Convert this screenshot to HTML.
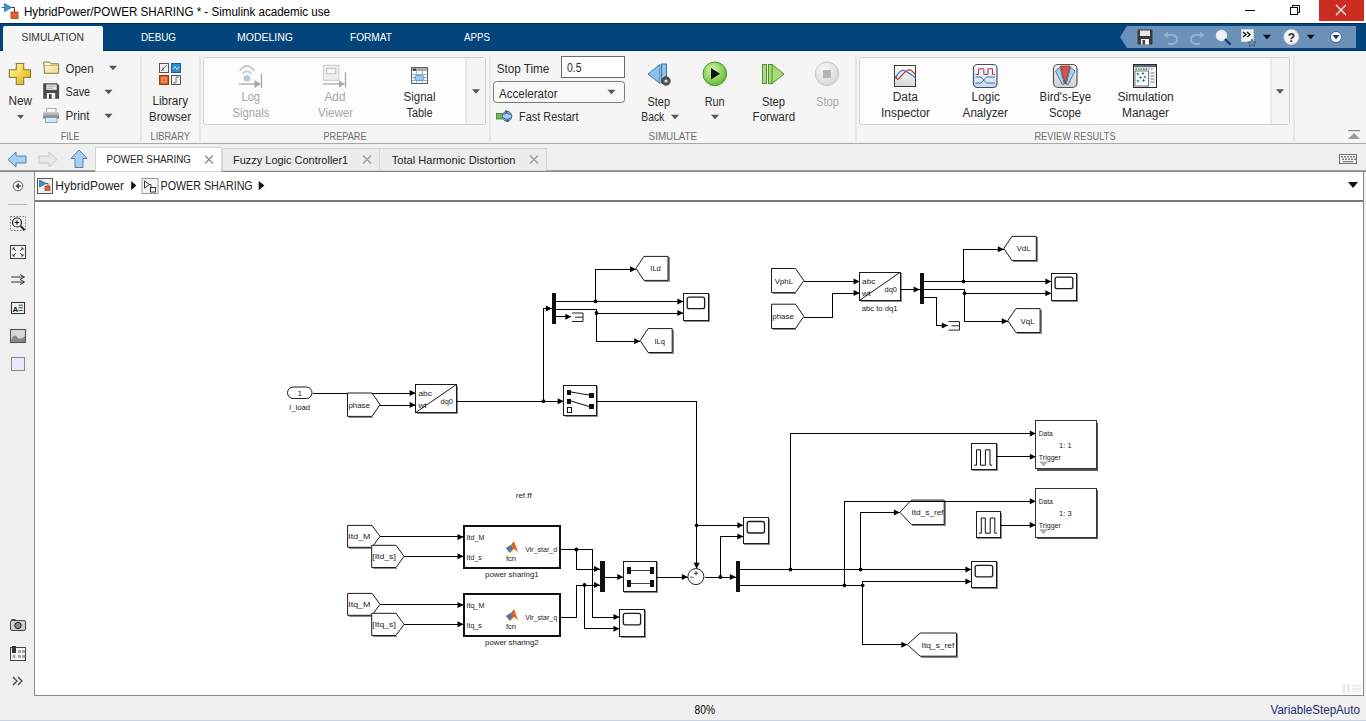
<!DOCTYPE html>
<html><head><meta charset="utf-8"><style>
html,body{margin:0;padding:0;width:1366px;height:721px;overflow:hidden;background:#fff}
svg{display:block;font-family:"Liberation Sans", sans-serif}
</style></head><body>
<svg width="1366" height="721" viewBox="0 0 1366 721" shape-rendering="auto">
<rect x="0" y="0" width="1366" height="23" fill="#ffffff" stroke="none" stroke-width="1" rx="0" />
<path d="M4.5,3.5 L4.5,11.5 L11.5,7.5 Z" fill="#3d9ad6" stroke="#1f6fa8" stroke-width="0.8" />
<polyline points="1.5,7.5 4.5,7.5" fill="none" stroke="#1f6fa8" stroke-width="1" />
<polyline points="11.5,7.5 14.5,7.5 14.5,12" fill="none" stroke="#333" stroke-width="1" />
<rect x="11" y="12" width="7" height="6.5" fill="#e8632c" stroke="#a04015" stroke-width="0.8" rx="0" />
<text x="24" y="16" font-size="12.5" fill="#000" text-anchor="start" font-weight="normal" textLength="306" lengthAdjust="spacingAndGlyphs" >HybridPower/POWER SHARING * - Simulink academic use</text>
<polyline points="1245,10.5 1255,10.5" fill="none" stroke="#000" stroke-width="1" />
<rect x="1290.5" y="7.5" width="7" height="7" fill="none" stroke="#000" stroke-width="1" rx="0" />
<path d="M1292.5,7.5 L1292.5,5.5 L1299.5,5.5 L1299.5,12.5 L1297.5,12.5" fill="none" stroke="#000" stroke-width="1" />
<rect x="1319" y="0" width="45" height="21" fill="#cb2d22" stroke="none" stroke-width="1" rx="0" />
<polyline points="1336,5 1346,15" fill="none" stroke="#fff" stroke-width="1.1" />
<polyline points="1346,5 1336,15" fill="none" stroke="#fff" stroke-width="1.1" />
<rect x="0" y="23" width="1366" height="28" fill="#03447b" stroke="none" stroke-width="1" rx="0" />
<rect x="0" y="23" width="1366" height="1" fill="#032f57" stroke="none" stroke-width="1" rx="0" />
<rect x="0" y="50" width="1366" height="1" fill="#032f57" stroke="none" stroke-width="1" rx="0" />
<path d="M3,51 L3,28 Q3,26 5,26 L101,26 Q103,26 103,28 L103,51 Z" fill="#f5f5f5" stroke="none" stroke-width="1" />
<text x="21.5" y="41" font-size="10.5" fill="#333" text-anchor="start" font-weight="normal" textLength="62.5" lengthAdjust="spacingAndGlyphs" >SIMULATION</text>
<text x="141" y="41" font-size="10.5" fill="#fff" text-anchor="start" font-weight="normal" textLength="35" lengthAdjust="spacingAndGlyphs" >DEBUG</text>
<text x="237" y="41" font-size="10.5" fill="#fff" text-anchor="start" font-weight="normal" textLength="56" lengthAdjust="spacingAndGlyphs" >MODELING</text>
<text x="350" y="41" font-size="10.5" fill="#fff" text-anchor="start" font-weight="normal" textLength="42" lengthAdjust="spacingAndGlyphs" >FORMAT</text>
<text x="464" y="41" font-size="10.5" fill="#fff" text-anchor="start" font-weight="normal" textLength="26" lengthAdjust="spacingAndGlyphs" >APPS</text>
<path d="M1120,37 L1127,26 L1356,26 L1356,48 L1127,48 Z" fill="#6b91b9" stroke="none" stroke-width="1" />
<rect x="0" y="51" width="1366" height="92" fill="#f5f5f5" stroke="none" stroke-width="1" rx="0" />
<rect x="0" y="143" width="1366" height="1" fill="#a8a8a8" stroke="none" stroke-width="1" rx="0" />
<rect x="0" y="144" width="1366" height="27" fill="#efefef" stroke="none" stroke-width="1" rx="0" />
<rect x="0" y="171" width="1366" height="550" fill="#f0f0f0" stroke="none" stroke-width="1" rx="0" />
<rect x="35" y="172" width="1328" height="28" fill="#ffffff" stroke="none" stroke-width="1" rx="0" />
<rect x="34" y="171" width="1" height="525" fill="#8a8a8a" stroke="none" stroke-width="1" rx="0" />
<rect x="0" y="170" width="1366" height="1" fill="#a0a0a0" stroke="none" stroke-width="1" rx="0" />
<rect x="0" y="171" width="1366" height="1" fill="#868686" stroke="none" stroke-width="1" rx="0" />
<rect x="35" y="200" width="1329" height="2" fill="#7a7a7a" stroke="none" stroke-width="1" rx="0" />
<rect x="35" y="202" width="1328" height="493" fill="#ffffff" stroke="none" stroke-width="1" rx="0" />
<rect x="34" y="695" width="1330" height="1" fill="#8a8a8a" stroke="none" stroke-width="1" rx="0" />
<rect x="1363" y="171" width="1" height="525" fill="#8a8a8a" stroke="none" stroke-width="1" rx="0" />
<rect x="0" y="696" width="1366" height="24" fill="#f0f0f0" stroke="none" stroke-width="1" rx="0" />
<rect x="0" y="720" width="1366" height="1" fill="#c5d3e0" stroke="none" stroke-width="1" rx="0" />
<text x="694.5" y="714" font-size="12" fill="#000" text-anchor="start" font-weight="normal" textLength="20.5" lengthAdjust="spacingAndGlyphs" >80%</text>
<text x="1270.5" y="714" font-size="12.5" fill="#1c2a6e" text-anchor="start" font-weight="normal" textLength="89.5" lengthAdjust="spacingAndGlyphs" >VariableStepAuto</text>
<rect x="140.5" y="56" width="1" height="86" fill="#dadada" stroke="none" stroke-width="1" rx="0" />
<rect x="199.5" y="56" width="1" height="86" fill="#dadada" stroke="none" stroke-width="1" rx="0" />
<rect x="489.5" y="56" width="1" height="86" fill="#dadada" stroke="none" stroke-width="1" rx="0" />
<rect x="855.5" y="56" width="1" height="86" fill="#dadada" stroke="none" stroke-width="1" rx="0" />
<rect x="1293.5" y="56" width="1" height="86" fill="#dadada" stroke="none" stroke-width="1" rx="0" />
<defs><linearGradient id="plusg" x1="0" y1="0" x2="1" y2="1"><stop offset="0" stop-color="#fff6c0"/><stop offset="0.5" stop-color="#f3d650"/><stop offset="1" stop-color="#d9a81c"/></linearGradient><linearGradient id="foldg" x1="0" y1="0" x2="1" y2="1"><stop offset="0" stop-color="#fffbe0"/><stop offset="1" stop-color="#ecd78a"/></linearGradient><linearGradient id="prng" x1="0" y1="0" x2="0" y2="1"><stop offset="0" stop-color="#d8d8d8"/><stop offset="1" stop-color="#707070"/></linearGradient></defs>
<path d="M16.3,63.5 L23.7,63.5 L23.7,69.8 L30.5,69.8 L30.5,77.5 L23.7,77.5 L23.7,84.5 L16.3,84.5 L16.3,77.5 L9.3,77.5 L9.3,69.8 L16.3,69.8 Z" fill="url(#plusg)" stroke="#8f7a2a" stroke-width="1.1" />
<text x="8.5" y="105" font-size="12" fill="#2b2b2b" text-anchor="start" font-weight="normal" textLength="23.5" lengthAdjust="spacingAndGlyphs" >New</text>
<path d="M17.0,115.0 L24.0,115.0 L20.5,119.0 Z" fill="#555" stroke="none" stroke-width="1" />
<path d="M43.7,62 L49.5,62 L51,63.8 L58.6,63.8 L58.6,73.3 L44.5,73.3 Z" fill="url(#foldg)" stroke="#8a7a40" stroke-width="1" />
<path d="M44,65.5 L58.3,65.5" fill="none" stroke="#b8a860" stroke-width="0.8" />
<text x="65.5" y="72.5" font-size="12" fill="#2b2b2b" text-anchor="start" font-weight="normal" textLength="28" lengthAdjust="spacingAndGlyphs" >Open</text>
<path d="M109.0,65.75 L117.0,65.75 L113,70.25 Z" fill="#555" stroke="none" stroke-width="1" />
<path d="M43.2,83.2 L57,83.2 L59.1,85.3 L59.1,98.7 L43.2,98.7 Z" fill="#4a4a4a" stroke="none" stroke-width="1" />
<rect x="46.3" y="84.5" width="10.4" height="5.4" fill="#e6e6e6" stroke="none" stroke-width="1" rx="0" />
<path d="M47.5,86.3 L55.5,86.3 M47.5,88.3 L53,88.3" fill="none" stroke="#999" stroke-width="0.7" />
<rect x="46.8" y="93" width="8.4" height="5.7" fill="#f4f4f4" stroke="none" stroke-width="1" rx="0" />
<rect x="49" y="94.2" width="2.6" height="4.5" fill="#3a3a3a" stroke="none" stroke-width="1" rx="0" />
<text x="65.5" y="96" font-size="12" fill="#2b2b2b" text-anchor="start" font-weight="normal" textLength="24.5" lengthAdjust="spacingAndGlyphs" >Save</text>
<path d="M104.5,89.75 L112.5,89.75 L108.5,94.25 Z" fill="#555" stroke="none" stroke-width="1" />
<rect x="46.5" y="108.5" width="9.5" height="4.5" fill="#fafafa" stroke="#999" stroke-width="0.8" rx="0" />
<rect x="43.2" y="111.7" width="15.9" height="7" fill="url(#prng)" stroke="none" stroke-width="1" rx="1.5" />
<rect x="45.5" y="117.5" width="11.5" height="5" fill="#d6e8f2" stroke="#7a98aa" stroke-width="0.8" rx="0" />
<text x="65.5" y="120" font-size="12" fill="#2b2b2b" text-anchor="start" font-weight="normal" textLength="24" lengthAdjust="spacingAndGlyphs" >Print</text>
<path d="M104.5,113.75 L112.5,113.75 L108.5,118.25 Z" fill="#555" stroke="none" stroke-width="1" />
<text x="60.8" y="139.5" font-size="10.5" fill="#6e6e6e" text-anchor="start" font-weight="normal" textLength="18.7" lengthAdjust="spacingAndGlyphs" >FILE</text>
<rect x="159.5" y="63.5" width="9" height="9" fill="#f2f2f2" stroke="#555" stroke-width="1" rx="0" />
<path d="M161,71 L167,65 M163,71 L163,67" fill="none" stroke="#555" stroke-width="0.8" />
<rect x="171.5" y="63.5" width="9" height="9" fill="#2f8fcf" stroke="#1d5f8f" stroke-width="1" rx="0" />
<path d="M173,69 Q175,65 176,68 T179,67" fill="none" stroke="#fff" stroke-width="0.8" />
<rect x="159.5" y="75.5" width="9" height="9" fill="#e05a1f" stroke="#9a3a10" stroke-width="1" rx="0" />
<rect x="162" y="78" width="4" height="4" fill="none" stroke="#ffd0b0" stroke-width="0.8" rx="0" />
<rect x="171.5" y="75.5" width="9" height="9" fill="#f2f2f2" stroke="#555" stroke-width="1" rx="0" />
<path d="M173,83 L176,83 L176,77 L179,77" fill="none" stroke="#555" stroke-width="0.8" />
<text x="152.5" y="105" font-size="12" fill="#2b2b2b" text-anchor="start" font-weight="normal" textLength="35.5" lengthAdjust="spacingAndGlyphs" >Library</text>
<text x="149" y="121" font-size="12" fill="#2b2b2b" text-anchor="start" font-weight="normal" textLength="42" lengthAdjust="spacingAndGlyphs" >Browser</text>
<text x="150.5" y="139.5" font-size="10.5" fill="#6e6e6e" text-anchor="start" font-weight="normal" textLength="39.5" lengthAdjust="spacingAndGlyphs" >LIBRARY</text>
<rect x="203.5" y="57.5" width="282" height="67" fill="#fdfdfd" stroke="#d0d0d0" stroke-width="1" rx="2" />
<rect x="466" y="58" width="19" height="66" fill="#f4f4f4" stroke="none" stroke-width="1" rx="0" />
<rect x="465.5" y="58" width="1" height="66" fill="#dcdcdc" stroke="none" stroke-width="1" rx="0" />
<path d="M472.0,89.25 L480.0,89.25 L476,93.75 Z" fill="#555" stroke="none" stroke-width="1" />
<path d="M239.5,71 Q247,61 254.5,71" fill="none" stroke="#c6ccd2" stroke-width="1.8" />
<path d="M242.5,74 Q247,68.5 251.5,74" fill="none" stroke="#c6ccd2" stroke-width="1.8" />
<circle cx="247" cy="78.2" r="3.3" fill="#b8c8d6"/>
<polyline points="239,84 255,84" fill="none" stroke="#b4b4b4" stroke-width="1.5" />
<path d="M254.5,80 L261,84 L254.5,88 Z" fill="#a8a8a8" stroke="none" stroke-width="1" />
<polyline points="261.5,73.5 261.5,88" fill="none" stroke="#a8a8a8" stroke-width="1.3" />
<text x="241.5" y="101" font-size="12" fill="#a6a6a6" text-anchor="start" font-weight="normal" textLength="18.5" lengthAdjust="spacingAndGlyphs" >Log</text>
<text x="232.5" y="117" font-size="12" fill="#a6a6a6" text-anchor="start" font-weight="normal" textLength="37" lengthAdjust="spacingAndGlyphs" >Signals</text>
<rect x="323.3" y="65.3" width="15.5" height="15" fill="#eceef0" stroke="#c8ccd0" stroke-width="1" rx="0" />
<rect x="326.5" y="68.3" width="9.3" height="5.5" fill="#f2f4f6" stroke="#b8bec4" stroke-width="0.9" rx="0" />
<polyline points="323,84 340,84" fill="none" stroke="#b4b4b4" stroke-width="1.5" />
<path d="M339,80.4 L345.2,84 L339,87.5 Z" fill="#a8a8a8" stroke="none" stroke-width="1" />
<polyline points="345.5,72.3 345.5,87.5" fill="none" stroke="#a8a8a8" stroke-width="1.3" />
<text x="324.5" y="101" font-size="12" fill="#a6a6a6" text-anchor="start" font-weight="normal" textLength="21" lengthAdjust="spacingAndGlyphs" >Add</text>
<text x="318" y="117" font-size="12" fill="#a6a6a6" text-anchor="start" font-weight="normal" textLength="35" lengthAdjust="spacingAndGlyphs" >Viewer</text>
<rect x="411.5" y="67.5" width="16" height="16" fill="#f4f8fb" stroke="#5a6470" stroke-width="1" rx="0" />
<rect x="412" y="68" width="15" height="3" fill="#b0aaa4" stroke="none" stroke-width="1" rx="0" />
<rect x="413" y="68.8" width="3" height="1.8" fill="#1f2f5a" stroke="none" stroke-width="1" rx="0" />
<polyline points="412,74.5 427,74.5" fill="none" stroke="#8aa0b4" stroke-width="0.8" />
<polyline points="412,77.5 427,77.5" fill="none" stroke="#8aa0b4" stroke-width="0.8" />
<polyline points="412,80.5 427,80.5" fill="none" stroke="#8aa0b4" stroke-width="0.8" />
<polyline points="416.6,71 416.6,83" fill="none" stroke="#8aa0b4" stroke-width="0.8" />
<polyline points="422.3,71 422.3,83" fill="none" stroke="#8aa0b4" stroke-width="0.8" />
<rect x="415.1" y="75.5" width="8.6" height="5" fill="#9cc8f0" stroke="#5a90c8" stroke-width="0.8" rx="1.2" />
<text x="403.5" y="101" font-size="12" fill="#2b2b2b" text-anchor="start" font-weight="normal" textLength="32" lengthAdjust="spacingAndGlyphs" >Signal</text>
<text x="406.5" y="117" font-size="12" fill="#2b2b2b" text-anchor="start" font-weight="normal" textLength="26" lengthAdjust="spacingAndGlyphs" >Table</text>
<text x="323.5" y="139.5" font-size="10.5" fill="#6e6e6e" text-anchor="start" font-weight="normal" textLength="43" lengthAdjust="spacingAndGlyphs" >PREPARE</text>
<text x="496.7" y="72.5" font-size="12" fill="#2b2b2b" text-anchor="start" font-weight="normal" textLength="52.5" lengthAdjust="spacingAndGlyphs" >Stop Time</text>
<rect x="561.5" y="56.5" width="63" height="21" fill="#fff" stroke="#6a6a6a" stroke-width="1" rx="0" />
<text x="567" y="72" font-size="12" fill="#2b2b2b" text-anchor="start" font-weight="normal" textLength="14.5" lengthAdjust="spacingAndGlyphs" >0.5</text>
<rect x="493.5" y="81.5" width="131" height="21" fill="#f8f8f8" stroke="#7a7a7a" stroke-width="1" rx="3" />
<text x="499" y="97.5" font-size="12" fill="#2b2b2b" text-anchor="start" font-weight="normal" textLength="58.5" lengthAdjust="spacingAndGlyphs" >Accelerator</text>
<path d="M607.5,89.75 L615.5,89.75 L611.5,94.25 Z" fill="#555" stroke="none" stroke-width="1" />
<rect x="496.5" y="113.5" width="6" height="5.5" fill="#7ab85a" stroke="#3f7a2f" stroke-width="0.8" rx="0" />
<circle cx="507" cy="116.2" r="4.8" fill="#a8cdea" stroke="#2f5f8f" stroke-width="1"/>
<path d="M503.5,114.5 Q507,111.5 510.5,114.5 M503.5,118 Q507,121 510.5,118" fill="none" stroke="#1f4f80" stroke-width="0.9" />
<path d="M505.5,109.8 L509,111.5 L505.5,113.2 Z M508.5,119.2 L505,121 L508.5,122.6 Z" fill="#2f5f8f" stroke="none" stroke-width="1" />
<text x="519" y="121" font-size="12" fill="#2b2b2b" text-anchor="start" font-weight="normal" textLength="59.5" lengthAdjust="spacingAndGlyphs" >Fast Restart</text>
<path d="M648,74 L660,64.5 L660,83.5 Z" fill="#8fc0e8" stroke="#3b78aa" stroke-width="1" />
<rect x="661.5" y="64" width="5" height="19" fill="#8fc0e8" stroke="#3b78aa" stroke-width="1" rx="0" />
<circle cx="666" cy="81" r="4.2" fill="#555" stroke="#333" stroke-width="0.8"/>
<circle cx="666" cy="81" r="1.6" fill="#ddd"/>
<text x="647.5" y="105.5" font-size="12" fill="#2b2b2b" text-anchor="start" font-weight="normal" textLength="22.5" lengthAdjust="spacingAndGlyphs" >Step</text>
<text x="641.3" y="121" font-size="12" fill="#2b2b2b" text-anchor="start" font-weight="normal" textLength="23" lengthAdjust="spacingAndGlyphs" >Back</text>
<path d="M671.0,114.75 L679.0,114.75 L675,119.25 Z" fill="#555" stroke="none" stroke-width="1" />
<defs><radialGradient id="rg" cx="0.4" cy="0.35" r="0.7"><stop offset="0" stop-color="#d6f5a8"/><stop offset="1" stop-color="#5fb82e"/></radialGradient><radialGradient id="sg" cx="0.4" cy="0.35" r="0.7"><stop offset="0" stop-color="#fafafa"/><stop offset="1" stop-color="#d4d4d4"/></radialGradient></defs>
<circle cx="714.8" cy="73.8" r="11.8" fill="url(#rg)" stroke="#4a8f2a" stroke-width="1"/>
<path d="M711,68 L720,73.8 L711,79.6 Z" fill="#111" stroke="none" stroke-width="1" />
<text x="704.7" y="105.5" font-size="12" fill="#2b2b2b" text-anchor="start" font-weight="normal" textLength="20" lengthAdjust="spacingAndGlyphs" >Run</text>
<path d="M711.0,114.75 L719.0,114.75 L715,119.25 Z" fill="#555" stroke="none" stroke-width="1" />
<rect x="762.5" y="64.5" width="4" height="19" fill="#a6da7a" stroke="#4f8f2f" stroke-width="1" rx="0" />
<rect x="768.5" y="64.5" width="4" height="19" fill="#a6da7a" stroke="#4f8f2f" stroke-width="1" rx="0" />
<path d="M772,64.5 L784,74 L772,83.5 Z" fill="#a6da7a" stroke="#4f8f2f" stroke-width="1" />
<text x="762" y="105.5" font-size="12" fill="#2b2b2b" text-anchor="start" font-weight="normal" textLength="23" lengthAdjust="spacingAndGlyphs" >Step</text>
<text x="752.6" y="121" font-size="12" fill="#2b2b2b" text-anchor="start" font-weight="normal" textLength="42.5" lengthAdjust="spacingAndGlyphs" >Forward</text>
<circle cx="827" cy="73.8" r="11.8" fill="url(#sg)" stroke="#c8c8c8" stroke-width="1"/>
<rect x="823" y="70" width="8" height="8" fill="#b5b5b5" stroke="none" stroke-width="1" rx="0" />
<text x="816" y="105.5" font-size="12" fill="#a6a6a6" text-anchor="start" font-weight="normal" textLength="23" lengthAdjust="spacingAndGlyphs" >Stop</text>
<text x="648.6" y="139.5" font-size="10.5" fill="#6e6e6e" text-anchor="start" font-weight="normal" textLength="48.5" lengthAdjust="spacingAndGlyphs" >SIMULATE</text>
<rect x="859.5" y="57.5" width="430" height="67" fill="#fdfdfd" stroke="#d0d0d0" stroke-width="1" rx="2" />
<rect x="1271" y="58" width="18" height="66" fill="#f4f4f4" stroke="none" stroke-width="1" rx="0" />
<rect x="1270.5" y="58" width="1" height="66" fill="#dcdcdc" stroke="none" stroke-width="1" rx="0" />
<path d="M1276.0,89.25 L1284.0,89.25 L1280,93.75 Z" fill="#555" stroke="none" stroke-width="1" />
<defs><linearGradient id="dig" x1="0" y1="0" x2="0" y2="1"><stop offset="0" stop-color="#ffffff"/><stop offset="1" stop-color="#d8d8d8"/></linearGradient><linearGradient id="lag" x1="0" y1="0" x2="0" y2="1"><stop offset="0" stop-color="#ffffff"/><stop offset="1" stop-color="#c8dcee"/></linearGradient></defs>
<rect x="894.5" y="65.5" width="21" height="21" fill="url(#dig)" stroke="#3a3a3a" stroke-width="1" rx="0" />
<path d="M895,78.5 C898,73 900.5,70.3 902.8,70.3 C906,70.3 910,74 915.2,77.5" fill="none" stroke="#3a78c0" stroke-width="1.2" />
<path d="M895,76.4 L897.7,79.5 C901,77 905,69.8 909,69.8 C911.5,69.8 913.5,72 915.2,74.4" fill="none" stroke="#c0392b" stroke-width="1.2" />
<text x="892.7" y="101" font-size="12" fill="#2b2b2b" text-anchor="start" font-weight="normal" textLength="25.3" lengthAdjust="spacingAndGlyphs" >Data</text>
<text x="881" y="117" font-size="12" fill="#2b2b2b" text-anchor="start" font-weight="normal" textLength="49" lengthAdjust="spacingAndGlyphs" >Inspector</text>
<rect x="973.5" y="64.5" width="23.5" height="23" fill="url(#lag)" stroke="#3f4f6a" stroke-width="1.2" rx="4" />
<path d="M975.5,74.4 L978.6,74.4 L978.6,68.8 L983.8,68.8 L983.8,74.4 L987.9,74.4 L987.9,68.8 L992.5,68.8 L992.5,74.4 L995,74.4" fill="none" stroke="#b03040" stroke-width="1" />
<path d="M975.5,77 L980,77 C983,77 984,83.1 988,83.1 L995,83.1 M975.5,83.1 L980,83.1 C983,83.1 984,77 988,77 L995,77" fill="none" stroke="#3a6fa8" stroke-width="1" />
<text x="971.6" y="101" font-size="12" fill="#2b2b2b" text-anchor="start" font-weight="normal" textLength="28.4" lengthAdjust="spacingAndGlyphs" >Logic</text>
<text x="962.6" y="117" font-size="12" fill="#2b2b2b" text-anchor="start" font-weight="normal" textLength="45.4" lengthAdjust="spacingAndGlyphs" >Analyzer</text>
<defs><linearGradient id="beg" x1="0" y1="0" x2="0" y2="1"><stop offset="0" stop-color="#f8f8f8"/><stop offset="1" stop-color="#d0d0d0"/></linearGradient></defs>
<rect x="1053.5" y="64.5" width="23.5" height="23" fill="url(#beg)" stroke="#555" stroke-width="1.2" rx="4.5" />
<path d="M1055.5,71 L1059.8,67 L1064.3,84 L1062.3,84.5 Z" fill="#a8d4f0" stroke="#2f5f8f" stroke-width="0.8" />
<path d="M1075,71 L1070.7,67 L1066.2,84 L1068.2,84.5 Z" fill="#a8d4f0" stroke="#2f5f8f" stroke-width="0.8" />
<path d="M1060.5,66 L1070,66 L1065.3,84 Z" fill="#d9534a" stroke="#8a2a2a" stroke-width="0.8" />
<text x="1039.6" y="101" font-size="12" fill="#2b2b2b" text-anchor="start" font-weight="normal" textLength="51.4" lengthAdjust="spacingAndGlyphs" >Bird's-Eye</text>
<text x="1049" y="117" font-size="12" fill="#2b2b2b" text-anchor="start" font-weight="normal" textLength="32" lengthAdjust="spacingAndGlyphs" >Scope</text>
<rect x="1133.5" y="64.5" width="23" height="23" fill="#f2f4f6" stroke="#2a2a2a" stroke-width="1" rx="0" />
<rect x="1134" y="65" width="22" height="2.2" fill="#5a6a80" stroke="none" stroke-width="1" rx="0" />
<rect x="1135.3" y="68.3" width="1.6" height="1.6" fill="#30a040" stroke="none" stroke-width="1" rx="0" />
<rect x="1137.8999999999999" y="68.3" width="1.6" height="1.6" fill="#30a040" stroke="none" stroke-width="1" rx="0" />
<rect x="1140.5" y="68.3" width="1.6" height="1.6" fill="#30a040" stroke="none" stroke-width="1" rx="0" />
<rect x="1143.1" y="68.3" width="1.6" height="1.6" fill="#d03030" stroke="none" stroke-width="1" rx="0" />
<rect x="1145.7" y="68.3" width="1.6" height="1.6" fill="#30a040" stroke="none" stroke-width="1" rx="0" />
<rect x="1148.3" y="68.3" width="1.6" height="1.6" fill="#b0b0b0" stroke="none" stroke-width="1" rx="0" />
<rect x="1150.8999999999999" y="68.3" width="1.6" height="1.6" fill="#b0b0b0" stroke="none" stroke-width="1" rx="0" />
<rect x="1135" y="71" width="13.5" height="15" fill="#fff" stroke="#555" stroke-width="0.8" rx="0" />
<path d="M1136.7,74 L1139.3,74 M1138,72.7 L1138,75.3" fill="none" stroke="#1f6f8f" stroke-width="0.9" />
<path d="M1141.7,73.5 L1144.3,73.5 M1143,72.2 L1143,74.8" fill="none" stroke="#1f6f8f" stroke-width="0.9" />
<path d="M1139.2,77.5 L1141.8,77.5 M1140.5,76.2 L1140.5,78.8" fill="none" stroke="#1f6f8f" stroke-width="0.9" />
<path d="M1136.7,81 L1139.3,81 M1138,79.7 L1138,82.3" fill="none" stroke="#1f6f8f" stroke-width="0.9" />
<path d="M1142.2,80.5 L1144.8,80.5 M1143.5,79.2 L1143.5,81.8" fill="none" stroke="#1f6f8f" stroke-width="0.9" />
<path d="M1143.7,77 L1146.3,77 M1145,75.7 L1145,78.3" fill="none" stroke="#1f6f8f" stroke-width="0.9" />
<polyline points="1150.5,73 1154.5,73" fill="none" stroke="#777" stroke-width="0.9" />
<polyline points="1150.5,76 1154.5,76" fill="none" stroke="#777" stroke-width="0.9" />
<polyline points="1150.5,79 1154.5,79" fill="none" stroke="#777" stroke-width="0.9" />
<polyline points="1150.5,82 1154.5,82" fill="none" stroke="#777" stroke-width="0.9" />
<text x="1117.5" y="101" font-size="12" fill="#2b2b2b" text-anchor="start" font-weight="normal" textLength="56.3" lengthAdjust="spacingAndGlyphs" >Simulation</text>
<text x="1122" y="117" font-size="12" fill="#2b2b2b" text-anchor="start" font-weight="normal" textLength="47" lengthAdjust="spacingAndGlyphs" >Manager</text>
<text x="1034.4" y="139.5" font-size="10.5" fill="#6e6e6e" text-anchor="start" font-weight="normal" textLength="81.2" lengthAdjust="spacingAndGlyphs" >REVIEW RESULTS</text>
<rect x="1348" y="130" width="12" height="1.2" fill="#888" stroke="none" stroke-width="1" rx="0" />
<path d="M1348,139 L1354,133 L1360,139 Z" fill="#9a9a9a" stroke="none" stroke-width="1" />
<rect x="1137.5" y="29.5" width="15" height="15" fill="#3b3b3b" stroke="none" stroke-width="1" rx="1" />
<rect x="1140" y="30.5" width="10" height="5.5" fill="#e8e8e8" stroke="none" stroke-width="1" rx="0" />
<rect x="1141" y="39" width="8" height="5.5" fill="#fafafa" stroke="none" stroke-width="1" rx="0" />
<rect x="1142.5" y="40" width="2.5" height="4.5" fill="#3b3b3b" stroke="none" stroke-width="1" rx="0" />
<path d="M1166,35 L1172,35 Q1177,35 1177,39.5 Q1177,44 1172,44 L1168,44" fill="none" stroke="#8fb1d3" stroke-width="1.8" />
<path d="M1163.5,35 L1168,31.5 L1168,38.5 Z" fill="#8fb1d3" stroke="none" stroke-width="1" />
<path d="M1202,35 L1196,35 Q1191,35 1191,39.5 Q1191,44 1196,44 L1200,44" fill="none" stroke="#8fb1d3" stroke-width="1.8" />
<path d="M1204.5,35 L1200,31.5 L1200,38.5 Z" fill="#8fb1d3" stroke="none" stroke-width="1" />
<circle cx="1221.5" cy="35.5" r="5" fill="#f2f2f2" stroke="#e8e8e8" stroke-width="1.5"/>
<polyline points="1225,39 1230.5,44.5" fill="none" stroke="#173a66" stroke-width="2.2" />
<rect x="1241.5" y="29.5" width="12" height="12" fill="#f4f4f4" stroke="#cfd8e0" stroke-width="0.8" rx="0" />
<path d="M1243,32 L1246,34.5 L1243,37 M1247,32 L1250,34.5 L1247,37" fill="none" stroke="#111" stroke-width="1.3" />
<path d="M1252,39 L1253.2,42 L1256,42 L1253.8,43.8 L1254.6,46.5 L1252,44.8 L1249.4,46.5 L1250.2,43.8 L1248,42 L1250.8,42 Z" fill="#6f96bd" stroke="#294d75" stroke-width="0.7" />
<path d="M1263.0,34.75 L1271.0,34.75 L1267,39.25 Z" fill="#111" stroke="none" stroke-width="1" />
<circle cx="1291.3" cy="37" r="7.4" fill="#f4f4f4" stroke="#cfd6de" stroke-width="1"/>
<text x="1291.3" y="41.5" font-size="12" fill="#2b2b2b" text-anchor="middle" font-weight="bold" >?</text>
<path d="M1306.7,34.75 L1314.7,34.75 L1310.7,39.25 Z" fill="#111" stroke="none" stroke-width="1" />
<circle cx="1336" cy="37" r="5.5" fill="#fff" stroke="#1f4f80" stroke-width="0.8"/>
<path d="M1332.5,35 L1339.5,35 L1336,39.5 Z" fill="#123f70" stroke="none" stroke-width="1" />
<path d="M8,159.5 L16,152 L16,156 L26,156 L26,163 L16,163 L16,167 Z" fill="#a9d0f0" stroke="#4a86b8" stroke-width="1" />
<path d="M57,159.5 L49,152 L49,156 L39,156 L39,163 L49,163 L49,167 Z" fill="#e8e8e8" stroke="#c8c8c8" stroke-width="1" />
<path d="M79,150 L87,158.5 L83,158.5 L83,167.5 L75,167.5 L75,158.5 L71,158.5 Z" fill="#a9d0f0" stroke="#4a86b8" stroke-width="1" />
<rect x="95.5" y="147.5" width="126" height="24" fill="#ffffff" stroke="#d4d4d4" stroke-width="1" rx="0" />
<rect x="96" y="169" width="125" height="2" fill="#ffffff" stroke="none" stroke-width="1" rx="0" />
<text x="106.6" y="163" font-size="11" fill="#222" text-anchor="start" font-weight="normal" textLength="84.4" lengthAdjust="spacingAndGlyphs" >POWER SHARING</text>
<path d="M205,155.5 L213,163.5 M213,155.5 L205,163.5" fill="none" stroke="#8a8a8a" stroke-width="1.2" />
<rect x="222.5" y="148.5" width="157" height="22" fill="#ececec" stroke="#d4d4d4" stroke-width="1" rx="0" />
<text x="233" y="163.5" font-size="11" fill="#222" text-anchor="start" font-weight="normal" textLength="115.2" lengthAdjust="spacingAndGlyphs" >Fuzzy Logic  Controller1</text>
<path d="M363,155.5 L371,163.5 M371,155.5 L363,163.5" fill="none" stroke="#9a9a9a" stroke-width="1.2" />
<rect x="379.5" y="148.5" width="167" height="22" fill="#ececec" stroke="#d4d4d4" stroke-width="1" rx="0" />
<text x="391.8" y="163.5" font-size="11" fill="#222" text-anchor="start" font-weight="normal" textLength="123.7" lengthAdjust="spacingAndGlyphs" >Total Harmonic Distortion</text>
<path d="M530,155.5 L538,163.5 M538,155.5 L530,163.5" fill="none" stroke="#9a9a9a" stroke-width="1.2" />
<rect x="1339.5" y="154.5" width="17" height="9" fill="#f4f4f4" stroke="#707070" stroke-width="1" rx="0" />
<rect x="1341" y="156" width="2" height="1.5" fill="#808080" stroke="none" stroke-width="1" rx="0" />
<rect x="1342" y="158.5" width="2" height="1.5" fill="#808080" stroke="none" stroke-width="1" rx="0" />
<rect x="1344" y="156" width="2" height="1.5" fill="#808080" stroke="none" stroke-width="1" rx="0" />
<rect x="1345" y="158.5" width="2" height="1.5" fill="#808080" stroke="none" stroke-width="1" rx="0" />
<rect x="1347" y="156" width="2" height="1.5" fill="#808080" stroke="none" stroke-width="1" rx="0" />
<rect x="1348" y="158.5" width="2" height="1.5" fill="#808080" stroke="none" stroke-width="1" rx="0" />
<rect x="1350" y="156" width="2" height="1.5" fill="#808080" stroke="none" stroke-width="1" rx="0" />
<rect x="1351" y="158.5" width="2" height="1.5" fill="#808080" stroke="none" stroke-width="1" rx="0" />
<rect x="1353" y="156" width="2" height="1.5" fill="#808080" stroke="none" stroke-width="1" rx="0" />
<rect x="1354" y="158.5" width="2" height="1.5" fill="#808080" stroke="none" stroke-width="1" rx="0" />
<rect x="1343" y="161" width="10" height="1.2" fill="#808080" stroke="none" stroke-width="1" rx="0" />
<circle cx="18" cy="186" r="4.8" fill="#f2f2f2" stroke="#666" stroke-width="1"/>
<path d="M15.5,186 L19,183 L19,189 Z" fill="#444" stroke="none" stroke-width="1" />
<polyline points="18,186 21,186" fill="none" stroke="#444" stroke-width="1.2" />
<rect x="37.5" y="178.5" width="15" height="15" fill="#f0f0f0" stroke="#555" stroke-width="1" rx="0" />
<path d="M39.5,180 L39.5,187 L46,183.5 Z" fill="#3d8fd0" stroke="#1f5f98" stroke-width="0.7" />
<polyline points="46,183.5 48,183.5 48,186" fill="none" stroke="#333" stroke-width="0.8" />
<rect x="45" y="186" width="5" height="4.5" fill="#d9642c" stroke="#8a3a10" stroke-width="0.6" rx="0" />
<text x="55.3" y="190.2" font-size="12.5" fill="#222" text-anchor="start" font-weight="normal" textLength="68.7" lengthAdjust="spacingAndGlyphs" >HybridPower</text>
<path d="M131.2,181 L136.3,185.6 L131.2,190.2 Z" fill="#111" stroke="none" stroke-width="1" />
<rect x="142" y="178.5" width="16" height="15" fill="#f6f6f6" stroke="#999" stroke-width="1" rx="0" />
<path d="M144.5,181 L144.5,188 L149.5,184.5 Z" fill="none" stroke="#222" stroke-width="0.9" />
<polyline points="149.5,184.5 151,184.5 151,187" fill="none" stroke="#222" stroke-width="0.8" />
<rect x="150.5" y="187.5" width="5" height="4.5" fill="none" stroke="#222" stroke-width="0.9" rx="0" />
<text x="160.5" y="190.2" font-size="12.5" fill="#222" text-anchor="start" font-weight="normal" textLength="92.2" lengthAdjust="spacingAndGlyphs" >POWER SHARING</text>
<path d="M258.7,181 L264.4,185.6 L258.7,190.2 Z" fill="#111" stroke="none" stroke-width="1" />
<path d="M1348,182 L1358,182 L1353,188 Z" fill="#111" stroke="none" stroke-width="1" />
<rect x="8" y="204" width="19" height="1" fill="#b8b8b8" stroke="none" stroke-width="1" rx="0" />
<rect x="10.5" y="216.5" width="15" height="14" fill="none" stroke="#555" stroke-width="0.8" rx="0" stroke-dasharray="1.5 1.5"/>
<circle cx="17" cy="222.5" r="4.5" fill="#f4f4f4" stroke="#222" stroke-width="1.2"/>
<path d="M14.8,222.5 L19.2,222.5 M17,220.3 L17,224.7" fill="none" stroke="#111" stroke-width="1.1" />
<polyline points="20.5,226 24.5,230" fill="none" stroke="#222" stroke-width="1.8" />
<rect x="10.5" y="245.5" width="15" height="13" fill="#f4f4f4" stroke="#444" stroke-width="1.1" rx="0" />
<path d="M13,248 L16,251 M13,248 L15,248 M13,248 L13,250 M23,248 L20,251 M23,248 L21,248 M23,248 L23,250 M13,256 L16,253 M13,256 L15,256 M13,256 L13,254 M23,256 L20,253 M23,256 L21,256 M23,256 L23,254" fill="none" stroke="#333" stroke-width="0.9" />
<path d="M11,277 L23,277 M11,282 L23,282 M20,274.5 L24.5,277 L20,279.5 M20,279.5 L24.5,282 L20,284.5" fill="none" stroke="#333" stroke-width="1" />
<rect x="11.5" y="302.5" width="13" height="11" fill="#fafafa" stroke="#333" stroke-width="1.1" rx="0" />
<text x="12.6" y="311.5" font-size="8" fill="#111" text-anchor="start" font-weight="bold" >A</text>
<path d="M18.5,305.2 L22.8,305.2 M18.5,307.8 L22.8,307.8 M18.5,310.4 L22.8,310.4" fill="none" stroke="#222" stroke-width="0.9" />
<rect x="10.5" y="329.5" width="15" height="13" fill="#d8d8d8" stroke="#555" stroke-width="1.1" rx="0" />
<path d="M11,340 Q14,333 17,337 Q20,341 25,336 L25,342 L11,342 Z" fill="#888" stroke="none" stroke-width="1" />
<rect x="11.5" y="357.5" width="13" height="13" fill="#e8e8f8" stroke="#8a8a8a" stroke-width="1" rx="0" />
<rect x="10.5" y="620.5" width="15" height="10" fill="#d0d0d0" stroke="#444" stroke-width="1" rx="1.5" />
<rect x="11.5" y="619" width="4" height="2" fill="#444" stroke="none" stroke-width="1" rx="0" />
<circle cx="18" cy="625.5" r="3.2" fill="#888" stroke="#222" stroke-width="1"/>
<rect x="10.5" y="647.5" width="15" height="13" fill="#f4f4f4" stroke="#444" stroke-width="1" rx="0" />
<rect x="12" y="646" width="4" height="7" fill="#333" stroke="none" stroke-width="1" rx="0" />
<rect x="12.5" y="655" width="3" height="3" fill="#aaa" stroke="none" stroke-width="1" rx="0" />
<rect x="18" y="650" width="3" height="3" fill="#aaa" stroke="none" stroke-width="1" rx="0" />
<rect x="22" y="650" width="3" height="3" fill="#aaa" stroke="none" stroke-width="1" rx="0" />
<rect x="18" y="655" width="3" height="3" fill="#aaa" stroke="none" stroke-width="1" rx="0" />
<rect x="22" y="655" width="3" height="3" fill="#aaa" stroke="none" stroke-width="1" rx="0" />
<path d="M13,677 L17,681 L13,685 M18,677 L22,681 L18,685" fill="none" stroke="#444" stroke-width="1.3" />
<rect x="1342.5" y="684" width="3" height="9.5" fill="#ececec" stroke="none" stroke-width="1" rx="0" />
<rect x="1347" y="684" width="3" height="9.5" fill="#ececec" stroke="none" stroke-width="1" rx="0" />
<rect x="1352" y="684.5" width="9.5" height="2" fill="#ececec" stroke="none" stroke-width="1" rx="0" />
<rect x="1352" y="687.5" width="9.5" height="2" fill="#ececec" stroke="none" stroke-width="1" rx="0" />
<rect x="1352" y="690.5" width="9.5" height="2" fill="#ececec" stroke="none" stroke-width="1" rx="0" />
<g stroke-linecap="butt">
<style>.dg text{stroke:none}</style>
<g class="dg">
<style>.dg polyline,.dg rect[rx="0"]{shape-rendering:crispEdges}</style>
<polyline points="312.5,393 415.6,393" fill="none" stroke="#000" stroke-width="1" />
<path d="M415.6,393 L409.6,390 L409.6,396 Z" fill="#000"/>
<rect x="287.5" y="387" width="24.5" height="11.5" fill="#fff" stroke="#1a1a1a" stroke-width="1" rx="5.7" />
<text x="299.8" y="396" font-size="8" fill="#1a1a1a" text-anchor="middle" font-weight="normal" >1</text>
<text x="289" y="409.5" font-size="8" fill="#1a1a1a" text-anchor="start" font-weight="normal" textLength="21" lengthAdjust="spacingAndGlyphs" >I_load</text>
<polyline points="380,405 415.6,405" fill="none" stroke="#000" stroke-width="1" />
<path d="M415.6,405 L409.6,402 L409.6,408 Z" fill="#000"/>
<polyline points="372.8,417.2 348.5,417.2" fill="none" stroke="#8a8a8a" stroke-width="1.4" />
<path d="M347.5,393 L372,393 L380,404.7 L372,416.4 L347.5,416.4 Z" fill="#fff" stroke="#1a1a1a" stroke-width="1" />
<text x="348.4" y="407.7" font-size="8" fill="#1a1a1a" text-anchor="start" font-weight="normal" textLength="21.6" lengthAdjust="spacingAndGlyphs" >phase</text>
<polyline points="457.2,385.5 457.2,413.40000000000003 416.6,413.40000000000003" fill="none" stroke="#8a8a8a" stroke-width="1.4" />
<rect x="415.6" y="384.5" width="40.799999999999955" height="28.100000000000023" fill="#fff" stroke="#1a1a1a" stroke-width="1" rx="0" />
<path d="M415.6,412.6 L456.4,384.5" fill="none" stroke="#1a1a1a" stroke-width="1" />
<text x="418.4" y="396" font-size="8" fill="#1a1a1a" text-anchor="start" font-weight="normal" textLength="13.5" lengthAdjust="spacingAndGlyphs" >abc</text>
<text x="418.2" y="407.5" font-size="8" fill="#1a1a1a" text-anchor="start" font-weight="normal" textLength="8.5" lengthAdjust="spacingAndGlyphs" >wt</text>
<text x="440.6" y="404" font-size="8" fill="#1a1a1a" text-anchor="start" font-weight="normal" textLength="12.4" lengthAdjust="spacingAndGlyphs" >dq0</text>
<polyline points="456.4,401.2 563.7,401.2" fill="none" stroke="#000" stroke-width="1" />
<path d="M563.7,401.2 L557.7,398.2 L557.7,404.2 Z" fill="#000"/>
<circle cx="543.5" cy="401.2" r="1.9" fill="#000"/>
<polyline points="543.5,401.2 543.5,308.6 551.8,308.6" fill="none" stroke="#000" stroke-width="1" />
<path d="M551.8,308.6 L545.8,305.6 L545.8,311.6 Z" fill="#000"/>
<rect x="551.8" y="293.2" width="4.400000000000091" height="30.80000000000001" fill="#111" stroke="none" stroke-width="1" rx="0" />
<polyline points="556.2,301.4 683.4,301.4" fill="none" stroke="#000" stroke-width="1" />
<path d="M683.4,301.4 L677.4,298.4 L677.4,304.4 Z" fill="#000"/>
<circle cx="595.5" cy="301.4" r="1.9" fill="#000"/>
<polyline points="595.5,301.4 595.5,269.2 636,269.2" fill="none" stroke="#000" stroke-width="1" />
<path d="M636,269.2 L630,266.2 L630,272.2 Z" fill="#000"/>
<polyline points="556.2,309.2 596.5,309.2 596.5,313 683.4,313" fill="none" stroke="#000" stroke-width="1" />
<path d="M683.4,313 L677.4,310 L677.4,316 Z" fill="#000"/>
<circle cx="596.5" cy="313" r="1.9" fill="#000"/>
<polyline points="596.5,313 596.5,341.2 640.2,341.2" fill="none" stroke="#000" stroke-width="1" />
<path d="M640.2,341.2 L634.2,338.2 L634.2,344.2 Z" fill="#000"/>
<polyline points="556.2,316.8 571.3,316.8" fill="none" stroke="#000" stroke-width="1" />
<path d="M571.3,316.8 L565.3,313.8 L565.3,319.8 Z" fill="#000"/>
<path d="M572,313 L583,313 L583,321.5 L572,321.5 M575,317.2 L583,317.2" fill="none" stroke="#222" stroke-width="1" />
<polyline points="668.8,257.4 668.8,281.2 644.9,281.2" fill="none" stroke="#8a8a8a" stroke-width="1.4" />
<path d="M636,268.4 L643.9,256.4 L668,256.4 L668,280.4 L643.9,280.4 Z" fill="#fff" stroke="#1a1a1a" stroke-width="1" />
<text x="650.3" y="271.4" font-size="7.5" fill="#1a1a1a" text-anchor="start" font-weight="normal" textLength="10.5" lengthAdjust="spacingAndGlyphs" >ILd</text>
<polyline points="673.0,329.6 673.0,353.3 649,353.3" fill="none" stroke="#8a8a8a" stroke-width="1.4" />
<path d="M640.2,340.55 L648,328.6 L672.2,328.6 L672.2,352.5 L648,352.5 Z" fill="#fff" stroke="#1a1a1a" stroke-width="1" />
<text x="654.5" y="343.55" font-size="7.5" fill="#1a1a1a" text-anchor="start" font-weight="normal" textLength="10.5" lengthAdjust="spacingAndGlyphs" >ILq</text>
<polyline points="709.0999999999999,294.2 709.0999999999999,320.90000000000003 684.4,320.90000000000003" fill="none" stroke="#8a8a8a" stroke-width="1.4" />
<rect x="683.4" y="293.2" width="24.899999999999977" height="26.900000000000034" fill="#fff" stroke="#1a1a1a" stroke-width="1" rx="0" />
<rect x="687.1999999999999" y="297.2" width="17.399999999999977" height="11.5" fill="#fff" stroke="#1a1a1a" stroke-width="1.3" rx="2" />
<polyline points="597.0999999999999,386.2 597.0999999999999,416.7 564.7,416.7" fill="none" stroke="#8a8a8a" stroke-width="1.4" />
<rect x="563.7" y="385.2" width="32.59999999999991" height="30.69999999999999" fill="#fff" stroke="#1a1a1a" stroke-width="1" rx="0" />
<rect x="566.5" y="389.5" width="4.5" height="5" fill="#111" stroke="none" stroke-width="1" rx="0" />
<rect x="566.5" y="398.5" width="4.5" height="5" fill="#111" stroke="none" stroke-width="1" rx="0" />
<rect x="567" y="407.5" width="4" height="5" fill="#fff" stroke="#111" stroke-width="1" rx="0" />
<rect x="589" y="392.5" width="4.5" height="5" fill="#111" stroke="none" stroke-width="1" rx="0" />
<rect x="589" y="404" width="4.5" height="5" fill="#111" stroke="none" stroke-width="1" rx="0" />
<path d="M571,392 L589,395" fill="none" stroke="#111" stroke-width="1" />
<path d="M571,401 L589,406.5" fill="none" stroke="#111" stroke-width="1" />
<polyline points="596.3,401.2 696.6,401.2 696.6,568.5" fill="none" stroke="#000" stroke-width="1" />
<path d="M696.6,568.7 L693.6,562.7 L699.6,562.7 Z" fill="#000"/>
<circle cx="696.6" cy="525.3" r="1.9" fill="#000"/>
<polyline points="696.6,525.3 743.4,525.3" fill="none" stroke="#000" stroke-width="1" />
<path d="M743.4,525.3 L737.4,522.3 L737.4,528.3 Z" fill="#000"/>
<polyline points="796.3,293.40000000000003 772.5,293.40000000000003" fill="none" stroke="#8a8a8a" stroke-width="1.4" />
<path d="M771.5,268.5 L795.5,268.5 L803.8,280.55 L795.5,292.6 L771.5,292.6 Z" fill="#fff" stroke="#1a1a1a" stroke-width="1" />
<text x="774.7" y="283.55" font-size="8" fill="#1a1a1a" text-anchor="start" font-weight="normal" textLength="18.3" lengthAdjust="spacingAndGlyphs" >VphL</text>
<polyline points="796.3,329.3 772.5,329.3" fill="none" stroke="#8a8a8a" stroke-width="1.4" />
<path d="M771.5,304.2 L795.5,304.2 L803.8,316.35 L795.5,328.5 L771.5,328.5 Z" fill="#fff" stroke="#1a1a1a" stroke-width="1" />
<text x="772.3" y="319.35" font-size="8" fill="#1a1a1a" text-anchor="start" font-weight="normal" textLength="21.6" lengthAdjust="spacingAndGlyphs" >phase</text>
<polyline points="803.8,281.4 859.6,281.4" fill="none" stroke="#000" stroke-width="1" />
<path d="M859.6,281.4 L853.6,278.4 L853.6,284.4 Z" fill="#000"/>
<polyline points="803.8,317.4 832.5,317.4 832.5,293 859.6,293" fill="none" stroke="#000" stroke-width="1" />
<path d="M859.6,293 L853.6,290 L853.6,296 Z" fill="#000"/>
<polyline points="900.8,273.4 900.8,301.2 860.6,301.2" fill="none" stroke="#8a8a8a" stroke-width="1.4" />
<rect x="859.6" y="272.4" width="40.39999999999998" height="28.0" fill="#fff" stroke="#1a1a1a" stroke-width="1" rx="0" />
<path d="M859.6,300.4 L900,272.4" fill="none" stroke="#1a1a1a" stroke-width="1" />
<text x="862" y="284" font-size="8" fill="#1a1a1a" text-anchor="start" font-weight="normal" textLength="13.5" lengthAdjust="spacingAndGlyphs" >abc</text>
<text x="862" y="296" font-size="8" fill="#1a1a1a" text-anchor="start" font-weight="normal" textLength="8.5" lengthAdjust="spacingAndGlyphs" >wt</text>
<text x="884.5" y="292" font-size="8" fill="#1a1a1a" text-anchor="start" font-weight="normal" textLength="12.4" lengthAdjust="spacingAndGlyphs" >dq0</text>
<text x="861.8" y="311" font-size="8" fill="#1a1a1a" text-anchor="start" font-weight="normal" textLength="35.7" lengthAdjust="spacingAndGlyphs" >abc to dq1</text>
<polyline points="900,289.6 919.6,289.6" fill="none" stroke="#000" stroke-width="1" />
<path d="M919.6,289.6 L913.6,286.6 L913.6,292.6 Z" fill="#000"/>
<rect x="919.6" y="273.2" width="4.699999999999932" height="30.80000000000001" fill="#111" stroke="none" stroke-width="1" rx="0" />
<polyline points="924.3,281.4 1051.3,281.4" fill="none" stroke="#000" stroke-width="1" />
<path d="M1051.3,281.4 L1045.3,278.4 L1045.3,284.4 Z" fill="#000"/>
<circle cx="963.5" cy="281.4" r="1.9" fill="#000"/>
<polyline points="963.5,281.4 963.5,249.2 1003.8,249.2" fill="none" stroke="#000" stroke-width="1" />
<path d="M1003.8,249.2 L997.8,246.2 L997.8,252.2 Z" fill="#000"/>
<polyline points="924.3,289.5 964.6,289.5 964.6,293.3 1051.3,293.3" fill="none" stroke="#000" stroke-width="1" />
<path d="M1051.3,293.3 L1045.3,290.3 L1045.3,296.3 Z" fill="#000"/>
<circle cx="964.6" cy="293.3" r="1.9" fill="#000"/>
<polyline points="964.6,293.3 964.6,321.3 1007.8,321.3" fill="none" stroke="#000" stroke-width="1" />
<path d="M1007.8,321.3 L1001.8,318.3 L1001.8,324.3 Z" fill="#000"/>
<polyline points="924.3,297.1 936.4,297.1 936.4,325.4 947.8,325.4" fill="none" stroke="#000" stroke-width="1" />
<path d="M947.8,325.4 L941.8,322.4 L941.8,328.4 Z" fill="#000"/>
<path d="M948.5,321.6 L959.5,321.6 L959.5,330.1 L948.5,330.1 M951.5,325.8 L959.5,325.8" fill="none" stroke="#222" stroke-width="1" />
<polyline points="1037.1,237.4 1037.1,261.3 1012.9,261.3" fill="none" stroke="#8a8a8a" stroke-width="1.4" />
<path d="M1003.8,248.45 L1011.9,236.4 L1036.3,236.4 L1036.3,260.5 L1011.9,260.5 Z" fill="#fff" stroke="#1a1a1a" stroke-width="1" />
<text x="1016.5" y="251.45" font-size="8" fill="#1a1a1a" text-anchor="start" font-weight="normal" textLength="14.2" lengthAdjust="spacingAndGlyphs" >VdL</text>
<polyline points="1040.8999999999999,309.6 1040.8999999999999,333.3 1016.9,333.3" fill="none" stroke="#8a8a8a" stroke-width="1.4" />
<path d="M1007.8,320.55 L1015.9,308.6 L1040.1,308.6 L1040.1,332.5 L1015.9,332.5 Z" fill="#fff" stroke="#1a1a1a" stroke-width="1" />
<text x="1020.5" y="323.55" font-size="8" fill="#1a1a1a" text-anchor="start" font-weight="normal" textLength="14.2" lengthAdjust="spacingAndGlyphs" >VqL</text>
<polyline points="1077.3,274.2 1077.3,301.0 1052.3,301.0" fill="none" stroke="#8a8a8a" stroke-width="1.4" />
<rect x="1051.3" y="273.2" width="25.200000000000045" height="27.0" fill="#fff" stroke="#1a1a1a" stroke-width="1" rx="0" />
<rect x="1055.1" y="277.2" width="17.700000000000045" height="11.5" fill="#fff" stroke="#1a1a1a" stroke-width="1.3" rx="2" />
<text x="515.7" y="497.8" font-size="8" fill="#1a1a1a" text-anchor="start" font-weight="normal" textLength="16" lengthAdjust="spacingAndGlyphs" >ref.ff</text>
<polyline points="372.8,548.0999999999999 348.6,548.0999999999999" fill="none" stroke="#8a8a8a" stroke-width="1.4" />
<path d="M347.6,525.4 L372,525.4 L380,536.3499999999999 L372,547.3 L347.6,547.3 Z" fill="#fff" stroke="#1a1a1a" stroke-width="1" />
<text x="348.3" y="539.3499999999999" font-size="8" fill="#1a1a1a" text-anchor="start" font-weight="normal" textLength="22" lengthAdjust="spacingAndGlyphs" >Itd_M</text>
<polyline points="396.8,568.3 372.7,568.3" fill="none" stroke="#8a8a8a" stroke-width="1.4" />
<path d="M371.7,545.3 L396,545.3 L404,556.4 L396,567.5 L371.7,567.5 Z" fill="#fff" stroke="#1a1a1a" stroke-width="1" />
<text x="372.3" y="559.4" font-size="8" fill="#1a1a1a" text-anchor="start" font-weight="normal" textLength="23.5" lengthAdjust="spacingAndGlyphs" >[Itd_s]</text>
<polyline points="380,536.9 462.9,536.9" fill="none" stroke="#000" stroke-width="1" />
<path d="M463.5,536.9 L457.5,533.9 L457.5,539.9 Z" fill="#000"/>
<polyline points="404,556.3 462.9,556.3" fill="none" stroke="#000" stroke-width="1" />
<path d="M463.5,556.3 L457.5,553.3 L457.5,559.3 Z" fill="#000"/>
<rect x="464.3" y="525.8" width="95.8" height="41.8" fill="#fff" stroke="#111" stroke-width="2" rx="0" />
<text x="466.6" y="540" font-size="8" fill="#1a1a1a" text-anchor="start" font-weight="normal" textLength="18" lengthAdjust="spacingAndGlyphs" >Itd_M</text>
<text x="466.6" y="560" font-size="8" fill="#1a1a1a" text-anchor="start" font-weight="normal" textLength="15.3" lengthAdjust="spacingAndGlyphs" >Itd_s</text>
<path d="M506,548 L511,545 L514,541 L518,552 L514,549 L510,553 Z" fill="#d9662a" stroke="none" stroke-width="1" />
<path d="M506,548 L511,545 L512,549 L509,552 Z" fill="#3f7fc0" stroke="none" stroke-width="1" />
<text x="505.9" y="561" font-size="8" fill="#1a1a1a" text-anchor="start" font-weight="normal" textLength="10.2" lengthAdjust="spacingAndGlyphs" >fcn</text>
<text x="525.2" y="552" font-size="8" fill="#1a1a1a" text-anchor="start" font-weight="normal" textLength="32" lengthAdjust="spacingAndGlyphs" >Vir_star_d</text>
<text x="485.1" y="577.3" font-size="8" fill="#1a1a1a" text-anchor="start" font-weight="normal" textLength="53.6" lengthAdjust="spacingAndGlyphs" >power sharing1</text>
<polyline points="372.8,616.0999999999999 348.6,616.0999999999999" fill="none" stroke="#8a8a8a" stroke-width="1.4" />
<path d="M347.6,593.4 L372,593.4 L380,604.3499999999999 L372,615.3 L347.6,615.3 Z" fill="#fff" stroke="#1a1a1a" stroke-width="1" />
<text x="348.3" y="607.3499999999999" font-size="8" fill="#1a1a1a" text-anchor="start" font-weight="normal" textLength="22" lengthAdjust="spacingAndGlyphs" >Itq_M</text>
<polyline points="396.8,636.3 372.7,636.3" fill="none" stroke="#8a8a8a" stroke-width="1.4" />
<path d="M371.7,613.3 L396,613.3 L404,624.4 L396,635.5 L371.7,635.5 Z" fill="#fff" stroke="#1a1a1a" stroke-width="1" />
<text x="372.3" y="627.4" font-size="8" fill="#1a1a1a" text-anchor="start" font-weight="normal" textLength="23.5" lengthAdjust="spacingAndGlyphs" >[Itq_s]</text>
<polyline points="380,604.9 462.9,604.9" fill="none" stroke="#000" stroke-width="1" />
<path d="M463.5,604.9 L457.5,601.9 L457.5,607.9 Z" fill="#000"/>
<polyline points="404,624.3 462.9,624.3" fill="none" stroke="#000" stroke-width="1" />
<path d="M463.5,624.3 L457.5,621.3 L457.5,627.3 Z" fill="#000"/>
<rect x="464.3" y="593.8" width="95.8" height="41.8" fill="#fff" stroke="#111" stroke-width="2" rx="0" />
<text x="466.6" y="608" font-size="8" fill="#1a1a1a" text-anchor="start" font-weight="normal" textLength="18" lengthAdjust="spacingAndGlyphs" >Itq_M</text>
<text x="466.6" y="628" font-size="8" fill="#1a1a1a" text-anchor="start" font-weight="normal" textLength="15.3" lengthAdjust="spacingAndGlyphs" >Itq_s</text>
<path d="M506,616 L511,613 L514,609 L518,620 L514,617 L510,621 Z" fill="#d9662a" stroke="none" stroke-width="1" />
<path d="M506,616 L511,613 L512,617 L509,620 Z" fill="#3f7fc0" stroke="none" stroke-width="1" />
<text x="505.9" y="629" font-size="8" fill="#1a1a1a" text-anchor="start" font-weight="normal" textLength="10.2" lengthAdjust="spacingAndGlyphs" >fcn</text>
<text x="525.2" y="620" font-size="8" fill="#1a1a1a" text-anchor="start" font-weight="normal" textLength="32" lengthAdjust="spacingAndGlyphs" >Vir_star_q</text>
<text x="485.1" y="645.3" font-size="8" fill="#1a1a1a" text-anchor="start" font-weight="normal" textLength="53.6" lengthAdjust="spacingAndGlyphs" >power sharing2</text>
<polyline points="560.5,549.5 592.5,549.5 592.5,617 619.5,617" fill="none" stroke="#000" stroke-width="1" />
<path d="M619.5,617 L613.5,614 L613.5,620 Z" fill="#000"/>
<circle cx="576.4" cy="549.5" r="1.9" fill="#000"/>
<polyline points="576.4,549.5 576.4,569 600,569" fill="none" stroke="#000" stroke-width="1" />
<path d="M600,569 L594,566 L594,572 Z" fill="#000"/>
<polyline points="560.5,617 576.4,617 576.4,585 600,585" fill="none" stroke="#000" stroke-width="1" />
<path d="M600,585 L594,582 L594,588 Z" fill="#000"/>
<circle cx="584.5" cy="585" r="1.9" fill="#000"/>
<polyline points="584.5,585 584.5,628.7 619.5,628.7" fill="none" stroke="#000" stroke-width="1" />
<path d="M619.5,628.7 L613.5,625.7 L613.5,631.7 Z" fill="#000"/>
<rect x="600" y="561.2" width="4.5" height="30.5" fill="#111" stroke="none" stroke-width="1" rx="0" />
<polyline points="604.5,577 623.3,577" fill="none" stroke="#000" stroke-width="1" />
<path d="M623.3,577 L617.3,574 L617.3,580 Z" fill="#000"/>
<polyline points="657.1999999999999,562.2 657.1999999999999,592.5 624.3,592.5" fill="none" stroke="#8a8a8a" stroke-width="1.4" />
<rect x="623.3" y="561.2" width="33.10000000000002" height="30.5" fill="#fff" stroke="#1a1a1a" stroke-width="1" rx="0" />
<polyline points="630,570.9 651,570.9" fill="none" stroke="#444" stroke-width="1" />
<rect x="627.2" y="567.4" width="3.5" height="7" fill="#111" stroke="none" stroke-width="1" rx="0" />
<rect x="650" y="567.4" width="3.5" height="7" fill="#111" stroke="none" stroke-width="1" rx="0" />
<polyline points="630,583.5 651,583.5" fill="none" stroke="#444" stroke-width="1" />
<rect x="627.2" y="580.0" width="3.5" height="7" fill="#111" stroke="none" stroke-width="1" rx="0" />
<rect x="650" y="580.0" width="3.5" height="7" fill="#111" stroke="none" stroke-width="1" rx="0" />
<polyline points="656.4,577 687.8,577" fill="none" stroke="#000" stroke-width="1" />
<path d="M687.8,577 L681.8,574 L681.8,580 Z" fill="#000"/>
<circle cx="695.9" cy="576.6" r="8" fill="#fff" stroke="#222" stroke-width="1"/>
<path d="M694,573.2 L698,573.2 M696,571.2 L696,575.2" fill="none" stroke="#222" stroke-width="0.9" />
<path d="M690,577.2 L693.6,577.2" fill="none" stroke="#444" stroke-width="0.9" />
<polyline points="645.0999999999999,610.3 645.0999999999999,636.8 620.5,636.8" fill="none" stroke="#8a8a8a" stroke-width="1.4" />
<rect x="619.5" y="609.3" width="24.799999999999955" height="26.700000000000045" fill="#fff" stroke="#1a1a1a" stroke-width="1" rx="0" />
<rect x="623.3" y="613.3" width="17.299999999999955" height="11.5" fill="#fff" stroke="#1a1a1a" stroke-width="1.3" rx="2" />
<polyline points="704.5,577 735.8,577" fill="none" stroke="#000" stroke-width="1" />
<path d="M735.8,577 L729.8,574 L729.8,580 Z" fill="#000"/>
<circle cx="720.4" cy="577" r="1.9" fill="#000"/>
<polyline points="720.4,577 720.4,536.5 743.4,536.5" fill="none" stroke="#000" stroke-width="1" />
<path d="M743.4,536.5 L737.4,533.5 L737.4,539.5 Z" fill="#000"/>
<polyline points="769.0,518.5 769.0,544.5 744.4,544.5" fill="none" stroke="#8a8a8a" stroke-width="1.4" />
<rect x="743.4" y="517.5" width="24.800000000000068" height="26.200000000000045" fill="#fff" stroke="#1a1a1a" stroke-width="1" rx="0" />
<rect x="747.1999999999999" y="521.5" width="17.300000000000068" height="11.5" fill="#fff" stroke="#1a1a1a" stroke-width="1.3" rx="2" />
<rect x="735.8" y="561.3" width="4.400000000000091" height="30.700000000000045" fill="#111" stroke="none" stroke-width="1" rx="0" />
<polyline points="740.2,569.5 971.4,569.5" fill="none" stroke="#000" stroke-width="1" />
<path d="M971.4,569.5 L965.4,566.5 L965.4,572.5 Z" fill="#000"/>
<polyline points="740.2,585.3 862.6,585.3 862.6,581.4 971.4,581.4" fill="none" stroke="#000" stroke-width="1" />
<path d="M971.4,581.4 L965.4,578.4 L965.4,584.4 Z" fill="#000"/>
<circle cx="790.5" cy="569.5" r="1.9" fill="#000"/>
<circle cx="860.6" cy="569.5" r="1.9" fill="#000"/>
<circle cx="844.4" cy="585.3" r="1.9" fill="#000"/>
<circle cx="862.6" cy="585.3" r="1.9" fill="#000"/>
<polyline points="790.5,569.5 790.5,433.6 1035.8,433.6" fill="none" stroke="#000" stroke-width="1" />
<path d="M1035.8,433.6 L1029.8,430.6 L1029.8,436.6 Z" fill="#000"/>
<polyline points="844.4,585.3 844.4,501.3 1035.8,501.3" fill="none" stroke="#000" stroke-width="1" />
<path d="M1035.8,501.3 L1029.8,498.3 L1029.8,504.3 Z" fill="#000"/>
<polyline points="860.6,569.5 860.6,512.5 899.9,512.5" fill="none" stroke="#000" stroke-width="1" />
<path d="M899.9,512.5 L893.9,509.5 L893.9,515.5 Z" fill="#000"/>
<polyline points="862.6,585.3 862.6,644.7 907.3,644.7" fill="none" stroke="#000" stroke-width="1" />
<path d="M907.3,644.7 L901.3,641.7 L901.3,647.7 Z" fill="#000"/>
<polyline points="945.0,501.1 945.0,525.3 912.4,525.3" fill="none" stroke="#8a8a8a" stroke-width="1.4" />
<path d="M899.9,512.3 L911.4,500.1 L944.2,500.1 L944.2,524.5 L911.4,524.5 Z" fill="#fff" stroke="#1a1a1a" stroke-width="1" />
<text x="911.4" y="515.3" font-size="8" fill="#1a1a1a" text-anchor="start" font-weight="normal" textLength="32.3" lengthAdjust="spacingAndGlyphs" >Itd_s_ref</text>
<polyline points="899.9,501.3 1035.8,501.3" fill="none" stroke="#000" stroke-width="1" />
<polyline points="957.3,634 957.3,657.0 921.2,657.0" fill="none" stroke="#8a8a8a" stroke-width="1.4" />
<path d="M907.3,644.6 L920.2,633 L956.5,633 L956.5,656.2 L920.2,656.2 Z" fill="#fff" stroke="#1a1a1a" stroke-width="1" />
<text x="921.6" y="647.6" font-size="8" fill="#1a1a1a" text-anchor="start" font-weight="normal" textLength="32.8" lengthAdjust="spacingAndGlyphs" >Itq_s_ref</text>
<polyline points="997.1999999999999,562.3 997.1999999999999,588.6999999999999 972.4,588.6999999999999" fill="none" stroke="#8a8a8a" stroke-width="1.4" />
<rect x="971.4" y="561.3" width="25.0" height="26.600000000000023" fill="#fff" stroke="#1a1a1a" stroke-width="1" rx="0" />
<rect x="975.1999999999999" y="565.3" width="17.5" height="11.5" fill="#fff" stroke="#1a1a1a" stroke-width="1.3" rx="2" />
<polyline points="997.0999999999999,444.3 997.0999999999999,470.2 972.2,470.2" fill="none" stroke="#8a8a8a" stroke-width="1.4" />
<rect x="971.2" y="443.3" width="25.09999999999991" height="26.099999999999966" fill="#fff" stroke="#1a1a1a" stroke-width="1" rx="0" />
<path d="M974.2,465.2 L976.5,465.2 L976.5,449.8 L980.5,449.8 L980.5,465.2 L985.4000000000001,465.2 L985.4000000000001,449.8 L990.0,449.8 L990.0,465.2 L992.2,465.2" fill="none" stroke="#111" stroke-width="1" stroke-linejoin="round"/>
<polyline points="996.5,456.8 1035.8,456.8" fill="none" stroke="#000" stroke-width="1" />
<path d="M1035.8,456.8 L1029.8,453.8 L1029.8,459.8 Z" fill="#000"/>
<polyline points="1001.0,512.5 1001.0,538.1999999999999 977,538.1999999999999" fill="none" stroke="#8a8a8a" stroke-width="1.4" />
<rect x="976" y="511.5" width="24.200000000000045" height="25.899999999999977" fill="#fff" stroke="#1a1a1a" stroke-width="1" rx="0" />
<path d="M979,533.1999999999999 L981.3,533.1999999999999 L981.3,518.0 L985.3,518.0 L985.3,533.1999999999999 L990.2,533.1999999999999 L990.2,518.0 L994.8,518.0 L994.8,533.1999999999999 L997,533.1999999999999" fill="none" stroke="#111" stroke-width="1" stroke-linejoin="round"/>
<polyline points="1000.2,525 1035.8,525" fill="none" stroke="#000" stroke-width="1" />
<path d="M1035.8,525 L1029.8,522 L1029.8,528 Z" fill="#000"/>
<polyline points="1097,422.5 1097,469.5 1037,469.5" fill="none" stroke="#555" stroke-width="2" />
<rect x="1035.8" y="420.5" width="60.2" height="48.0" fill="#fff" stroke="#333" stroke-width="1" rx="0" />
<text x="1038.8" y="436.09999999999997" font-size="7.3" fill="#1a1a1a" text-anchor="start" font-weight="normal" textLength="14" lengthAdjust="spacingAndGlyphs" >Data</text>
<text x="1059" y="447.9" font-size="8" fill="#1a1a1a" text-anchor="start" font-weight="normal" textLength="12.6" lengthAdjust="spacingAndGlyphs" >1: 1</text>
<text x="1038.8" y="460.09999999999997" font-size="7.3" fill="#1a1a1a" text-anchor="start" font-weight="normal" textLength="22" lengthAdjust="spacingAndGlyphs" >Trigger</text>
<path d="M1039,461.4 L1048,461.4 L1043.5,466.4 Z" fill="#b0b0b0" stroke="none" stroke-width="1" />
<polyline points="1097,490.4 1097,538 1037,538" fill="none" stroke="#555" stroke-width="2" />
<rect x="1035.8" y="488.4" width="60.2" height="48.60000000000002" fill="#fff" stroke="#333" stroke-width="1" rx="0" />
<text x="1038.8" y="504.0" font-size="7.3" fill="#1a1a1a" text-anchor="start" font-weight="normal" textLength="14" lengthAdjust="spacingAndGlyphs" >Data</text>
<text x="1059" y="515.8" font-size="8" fill="#1a1a1a" text-anchor="start" font-weight="normal" textLength="12.6" lengthAdjust="spacingAndGlyphs" >1: 3</text>
<text x="1038.8" y="528.0" font-size="7.3" fill="#1a1a1a" text-anchor="start" font-weight="normal" textLength="22" lengthAdjust="spacingAndGlyphs" >Trigger</text>
<path d="M1039,529.3 L1048,529.3 L1043.5,534.3 Z" fill="#b0b0b0" stroke="none" stroke-width="1" />
</g></g>
</svg></body></html>
